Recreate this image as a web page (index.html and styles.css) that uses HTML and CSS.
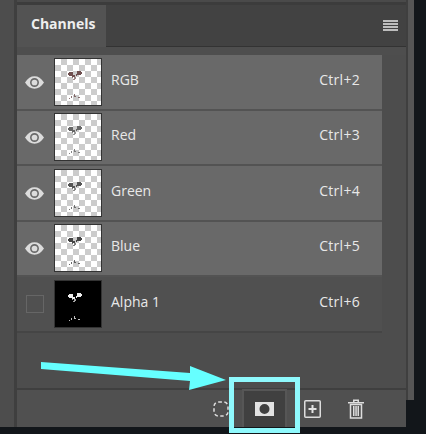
FILE: index.html
```html
<!DOCTYPE html>
<html lang="en">

<head>
    <meta charset="UTF-8">
    <meta name="viewport" content="width=device-width, initial-scale=1.0">
    <title>Channels</title>
    <link rel="stylesheet" href="styles.css">
</head>

<body>
    <svg class="defs" width="0" height="0">
        <symbol id="eye" viewBox="0 0 20 13">
            <path fill-rule="evenodd" d="M0 6.500C3 2 6 0 10 0s7 2 10 6.500C17 11 14 13 10 13S3 11 0 6.500zM10 1.800a4.700 4.700 0 1 0 0 9.400 4.700 4.700 0 0 0 0-9.400z" fill="#dcdcdc" />
            <circle cx="10" cy="6.500" r="3" fill="#dcdcdc" />
        </symbol>
        <!-- the small picture inside each channel thumb -->
        <symbol id="marks" viewBox="0 0 46 46">
            <path d="M14 13h4v4h-4zM13 14h1v2h-1zM22 12h4v4h-4zM26 13h1v2h-1zM21 15h1v2h-1zM17 16h3v2h-3z" />
            <path d="M17 18h1v1h-1zM19 18h2v2h-2zM18 20h2v1h-2z" opacity=".7" />
            <path d="M19 35h1v3h-1zM16 37h1v2h-1zM20 37h1v1h-1zM23 38h2v1h-2zM14 39h1v1h-1z" opacity=".8" />
        </symbol>
    </svg>

    <div class="app">
        <div class="gutter"></div>

        <div class="panel">
            <div class="top-line"></div>
            <div class="tabbar">
                <div class="tab">Channels</div>
                <svg class="menu" width="15" height="12" viewBox="0 0 15 12">
                    <path d="M0 0h15v2H0zM0 3h15v2H0zM0 6h15v2H0zM0 9h15v2H0z" fill="#bdbdbd" />
                </svg>
            </div>
            <div class="strip"></div>

            <div class="body">
                <ul class="rows">
                    <li class="row">
                        <svg class="eye" width="19" height="13"><use href="#eye" /></svg>
                        <div class="thumb checker rgb"><svg width="46" height="46"><use href="#marks" /></svg></div>
                        <span class="name">RGB</span>
                        <span class="key">Ctrl+2</span>
                    </li>
                    <li class="row">
                        <svg class="eye" width="19" height="13"><use href="#eye" /></svg>
                        <div class="thumb checker red"><svg width="46" height="46"><use href="#marks" /></svg></div>
                        <span class="name">Red</span>
                        <span class="key">Ctrl+3</span>
                    </li>
                    <li class="row">
                        <svg class="eye" width="19" height="13"><use href="#eye" /></svg>
                        <div class="thumb checker green"><svg width="46" height="46"><use href="#marks" /></svg></div>
                        <span class="name">Green</span>
                        <span class="key">Ctrl+4</span>
                    </li>
                    <li class="row">
                        <svg class="eye" width="19" height="13"><use href="#eye" /></svg>
                        <div class="thumb checker blue"><svg width="46" height="46"><use href="#marks" /></svg></div>
                        <span class="name">Blue</span>
                        <span class="key">Ctrl+5</span>
                    </li>
                    <li class="row off">
                        <div class="check"></div>
                        <div class="thumb black"><svg width="46" height="46"><use href="#marks" /></svg></div>
                        <span class="name">Alpha 1</span>
                        <span class="key">Ctrl+6</span>
                    </li>
                </ul>
            </div>

            <div class="footer">
                <!-- load selection -->
                <svg class="tool" width="16" height="16" viewBox="0 0 16 16">
                    <rect x="1" y="1" width="14" height="14" rx="4.500" fill="none" stroke="#ddd" stroke-width="1.500" stroke-dasharray="3.400 2.500" />
                </svg>
                <div class="mask-btn">
                    <svg width="19" height="14" viewBox="0 0 19 14">
                        <path fill-rule="evenodd" d="M0 0h19v14H0zM9.500 2a5 5 0 1 0 0 10 5 5 0 0 0 0-10z" fill="#e2e2e2" />
                    </svg>
                </div>
                <svg class="tool new" width="17" height="18" viewBox="0 0 17 18">
                    <rect x=".75" y=".75" width="15.500" height="16.500" rx="1" fill="none" stroke="#ddd" stroke-width="1.500" />
                    <path d="M7.500 5h2v3h3v2h-3v3h-2v-3h-3V8h3z" fill="#e2e2e2" />
                </svg>
                <svg class="tool trash" width="16" height="20" viewBox="0 0 16 20">
                    <path d="M0 3h16v1.500H0zM5 .5h6V3H9.500V2h-3v1H5z" fill="#ddd" />
                    <path d="M2.500 5.500h11V19h-11z" fill="none" stroke="#ddd" stroke-width="1.500" />
                    <path d="M5 7h1.500v10H5zM7.300 7h1.500v10H7.300zM9.500 7H11v10H9.500z" fill="#ddd" />
                </svg>
            </div>
        </div>

        <div class="edge"></div>

        <!-- annotation on top of the screenshot -->
        <svg class="note" width="426" height="434" viewBox="0 0 426 434">
            <path d="M41 362L190 373L190 366L226 380L189 390L190 381L41 369z" fill="#66ffff" />
            <rect x="231.500" y="379.500" width="66" height="51" fill="none" stroke="#8ff9fd" stroke-width="5" />
        </svg>
    </div>
</body>

</html>
```

FILE: styles.css
```css
* {
    margin: 0;
    padding: 0;
    box-sizing: border-box;
}

body {
    background: #12161a;
    font-family: "Open Sans", "Liberation Sans", sans-serif;
    overflow: hidden;
}

ul {
    list-style: none;
}

.defs {
    display: block;
}

.app {
    position: relative;
    display: flex;
    align-items: flex-start;
    width: 426px;
    height: 434px;
}

.gutter {
    width: 17px;
    height: 427px;
    background: #4d4d4d;
    border-right: 3px solid #3f3f3f;
}

.panel {
    display: flex;
    flex-direction: column;
    width: 389px;
    height: 427px;
    background: #505050;
}

.top-line {
    height: 5px;
    border-top: 2px solid #4a4a4a;
    background: #3c3c3c;
}

.tabbar {
    display: flex;
    justify-content: space-between;
    align-items: center;
    height: 42px;
    padding-right: 8px;
    background: #424242;
    border-bottom: 1px solid #333;
}

.tab {
    width: 89px;
    height: 42px;
    padding: 3px 0 0 14px;
    background: #535353;
    color: #eee;
    font-size: 14px;
    font-weight: 700;
    line-height: 32px;
}

.strip {
    height: 8px;
    background: #4e4e4e;
}

.body {
    height: 335px;
    padding-right: 24px;
    background: #4d4d4d;
    border-bottom: 2px solid #3f3f3f;
}

.row {
    display: flex;
    align-items: center;
    height: 55.500px;
    padding: 0 22px 0 8px;
    background: #696969;
    border-bottom: 2px solid #535353;
    color: #e8e8e8;
    font-size: 14px;
}

.row.off {
    background: #505050;
    border-bottom-color: #454545;
}

.eye {
    flex: none;
    margin-top: 1px;
}

.check {
    flex: none;
    width: 18px;
    height: 18px;
    margin: 1px 0 0 1px;
    border: 1px solid #666;
}

.thumb {
    flex: none;
    width: 48px;
    height: 48px;
    margin: 0 9px 0 10px;
    border: 1px solid #333;
}

.thumb svg {
    display: block;
}

.checker {
    background: conic-gradient(#ccc 25%, #fff 0 50%, #ccc 0 75%, #fff 0) 0 0 / 12px 12px;
}

.black {
    background: #000;
    color: #eee;
}

.rgb {
    color: #6e4f4f;
}

.red {
    color: #666;
}

.green {
    color: #555;
}

.blue {
    color: #444;
}

.thumb use {
    fill: currentColor;
}

.name {
    flex: 1;
    margin-bottom: 5px;
}

.key {
    margin-bottom: 5px;
    letter-spacing: .3px;
}

.footer {
    display: flex;
    align-items: center;
    flex: 1;
    padding-left: 196px;
    background: #505050;
}

.tool {
    flex: none;
}

.mask-btn {
    display: flex;
    justify-content: center;
    align-items: center;
    width: 45px;
    height: 38px;
    margin: -2px 0 0 13px;
    background: #404040;
    border: 2px solid #565656;
    border-bottom: 0;
}

.new {
    margin-left: 17px;
}

.trash {
    margin-left: 27px;
}

.edge {
    width: 8px;
    height: 400px;
    background: #555;
    border-left: 2px solid #3f3f3f;
}

.note {
    position: absolute;
    left: 0;
    top: 0;
}
```
